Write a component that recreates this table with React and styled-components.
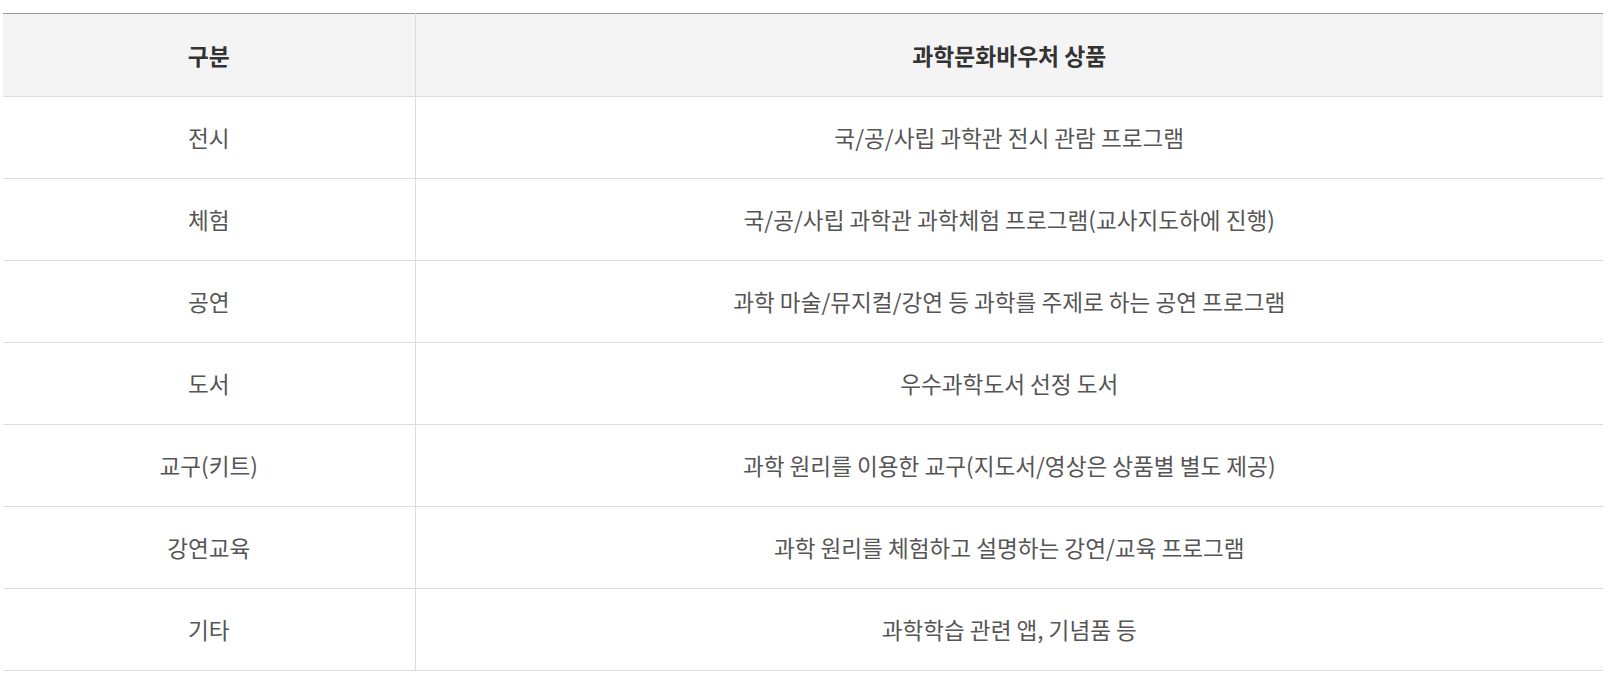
import React from 'react'
import styled, {createGlobalStyle} from 'styled-components'

const GlobalStyle = createGlobalStyle`
	body{
		margin: 0;
		background: #fff;
		font-family: "Noto Sans CJK KR", "Noto Sans", sans-serif;
	}
`

const Wrapper = styled.div`
	padding: 13px 7px 0 3px;
`

const Table = styled.table`
	width: 1600px;
	border-collapse: collapse;
	table-layout: fixed;
	border-top: 1px solid #999;

	col.type{ width: 412px; }
`

const HeadCell = styled.th`
	height: 82px;
	padding: 0;
	background: #f4f4f4;
	border-bottom: 1px solid #ddd;
	border-left: ${p => p.$divider ? '1px solid #ddd' : 'none'};
	color: #333;
	font-size: 22.8px;
	font-weight: 700;
	text-align: center;
	vertical-align: middle;
`

const Cell = styled.td`
	height: 81px;
	padding: 0;
	border-bottom: 1px solid #ddd;
	border-left: ${p => p.$divider ? '1px solid #ddd' : 'none'};
	color: #555;
	font-size: 22.6px;
	text-align: center;
	vertical-align: middle;
`

const rows = [
	['전시', '국/공/사립 과학관 전시 관람 프로그램'],
	['체험', '국/공/사립 과학관 과학체험 프로그램(교사지도하에 진행)'],
	['공연', '과학 마술/뮤지컬/강연 등 과학를 주제로 하는 공연 프로그램'],
	['도서', '우수과학도서 선정 도서'],
	['교구(키트)', '과학 원리를 이용한 교구(지도서/영상은 상품별 별도 제공)'],
	['강연교육', '과학 원리를 체험하고 설명하는 강연/교육 프로그램'],
	['기타', '과학학습 관련 앱, 기념품 등'],
]

export default function App() {
	return (
		<Wrapper>
			<GlobalStyle/>
			<Table>
				<colgroup>
					<col className="type"/>
					<col/>
				</colgroup>
				<thead>
					<tr>
						<HeadCell>구분</HeadCell>
						<HeadCell $divider>과학문화바우처 상품</HeadCell>
					</tr>
				</thead>
				<tbody>
					{rows.map(([type, product]) =>
						<tr key={type}>
							<Cell>{type}</Cell>
							<Cell $divider>{product}</Cell>
						</tr>
					)}
				</tbody>
			</Table>
		</Wrapper>
	)
}
